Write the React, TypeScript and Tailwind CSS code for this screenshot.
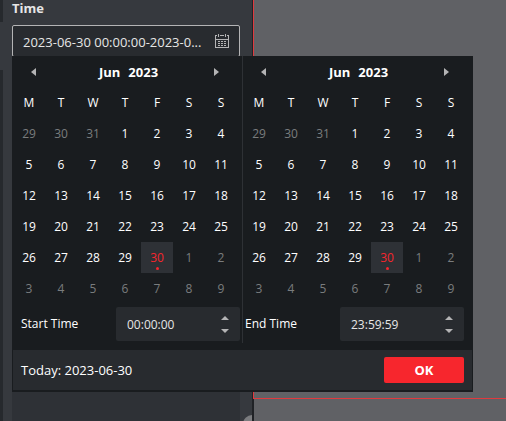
import { useState } from "react";

const weekdays = ["M", "T", "W", "T", "F", "S", "S"];

// six weeks, starting on Monday 29 May 2023
const weeks = Array.from({ length: 6 }, (_, week) =>
  Array.from({ length: 7 }, (_, day) => new Date(2023, 4, 29 + week * 7 + day))
);

function CalendarIcon() {
  return (
    <svg className="block" width="14" height="14" viewBox="0 0 14 14" shapeRendering="crispEdges" aria-hidden="true">
      <path
        d="M2 1.5H.5V13.5H13.5V1.5H12M5 1.5H9M0 5.5H14M3.5 0V3M10.5 0V3"
        fill="none"
        stroke="#b4b4b5"
      />
      <path
        d="M3 7.5H5M6 7.5H8M9 7.5H11M3 9.5H5M6 9.5H8M9 9.5H11M3 11.5H5M6 11.5H8M9 11.5H11"
        fill="none"
        stroke="#b4b4b5"
      />
    </svg>
  );
}

function Month({ label }: { label: string }) {
  const [selected, setSelected] = useState(new Date(2023, 5, 30).getTime());

  return (
    <section aria-label={label} className="pr-[5px]">
      <header className="flex h-[30px] items-center justify-between px-[18px]">
        <button type="button" aria-label="Previous month">
          <svg className="block" width="5" height="8" viewBox="0 0 5 8" fill="#b4b4b5">
            <path d="M5 0V8L0 4Z" />
          </svg>
        </button>
        <div className="flex gap-2 pb-px pl-[7px] text-[13px] font-bold">
          <span>Jun</span>
          <span>2023</span>
        </div>
        <button type="button" aria-label="Next month">
          <svg className="block" width="5" height="8" viewBox="0 0 5 8" fill="#b4b4b5">
            <path d="M0 0V8L5 4Z" />
          </svg>
        </button>
      </header>

      <table className="border-collapse">
        <thead>
          <tr>
            {weekdays.map((day, i) => (
              <th key={i} className="h-[31px] w-8 p-0 text-center font-medium">
                {day}
              </th>
            ))}
          </tr>
        </thead>
        <tbody>
          {weeks.map((week, i) => (
            <tr key={i}>
              {week.map((date) => {
                const active = date.getTime() === selected;
                const color = active
                  ? "bg-[#2e3136] text-[#f5262d]"
                  : date.getMonth() === 5
                    ? "text-white"
                    : "text-[#7a7c7e]";

                return (
                  <td key={date.getTime()} className="p-0">
                    <button
                      type="button"
                      onClick={() => setSelected(date.getTime())}
                      className={`relative block h-[31px] w-8 text-center ${color}`}
                    >
                      {date.getDate()}
                      {active && (
                        <span className="absolute bottom-[3px] left-[15px] size-[3px] rounded-full bg-[#f5262d]" />
                      )}
                    </button>
                  </td>
                );
              })}
            </tr>
          ))}
        </tbody>
      </table>
    </section>
  );
}

function TimeField({ id, label, value }: { id: string; label: string; value: string }) {
  return (
    <div className="flex items-center justify-between">
      <label htmlFor={id}>{label}</label>
      <div className="flex h-[34px] w-[124px] items-center rounded-xs bg-[#282b2f] px-[11px]">
        <input
          id={id}
          type="text"
          defaultValue={value}
          className="min-w-0 flex-1 bg-transparent pt-px text-[#e6e6e6] outline-none"
        />
        <div className="flex flex-col gap-[9px]">
          <button type="button" aria-label={`Increase ${label}`}>
            <svg className="block" width="8" height="4" viewBox="0 0 8 4" fill="#b4b4b5">
              <path d="M0 4H8L4 0Z" />
            </svg>
          </button>
          <button type="button" aria-label={`Decrease ${label}`}>
            <svg className="block" width="8" height="4" viewBox="0 0 8 4" fill="#b4b4b5">
              <path d="M0 0H8L4 4Z" />
            </svg>
          </button>
        </div>
      </div>
    </div>
  );
}

function RangePicker() {
  return (
    <div className="absolute left-0 top-[31px] z-10 w-max bg-[#191c1f] px-px pb-[2px] text-white">
      <div className="flex pb-[7px]">
        <div className="flex flex-col gap-[3px] border-r border-[#2e3135] pb-[2px] pt-px">
          <Month label="Start date" />
          <div className="pl-2 pr-[2px]">
            <TimeField id="start-time" label="Start Time" value="00:00:00" />
          </div>
        </div>
        <div className="flex flex-col gap-[3px] pb-[2px] pt-px">
          <Month label="End date" />
          <div className="pl-[2px] pr-2">
            <TimeField id="end-time" label="End Time" value="23:59:59" />
          </div>
        </div>
      </div>
      <footer className="flex h-10 items-center justify-between bg-[#282b2f] px-2 text-[13px]">
        <span>Today: 2023-06-30</span>
        <button
          type="button"
          className="h-[26px] w-20 rounded-xs bg-[#f7262d] text-center font-bold"
        >
          OK
        </button>
      </footer>
    </div>
  );
}

export default function App() {
  return (
    <div className="relative flex h-screen overflow-hidden bg-[#606165] font-['Open_Sans','Noto_Sans',sans-serif] text-[12px] leading-4 text-white">
      <aside className="relative flex w-1/2 border-r border-[#202226] bg-[#36393e]">
        <div className="flex w-[3px] flex-col">
          <div className="h-[22px] bg-[#26292d]" />
          <div className="h-12" />
          <div className="flex-1 bg-[#26292d]" />
        </div>

        <div className="flex min-w-0 flex-1 flex-col pl-[9px] pr-3">
          <label htmlFor="range" className="pb-[9px] text-[13px] font-bold text-[#e6e6e6]">
            Time
          </label>
          <div className="relative">
            <div className="flex h-8 items-center rounded-xs border border-[#b4b4b5] bg-[#282b2f] px-[10px]">
              <input
                id="range"
                type="text"
                defaultValue="2023-06-30 00:00:00-2023-0..."
                className="min-w-0 flex-1 bg-transparent pt-px text-[13px] text-[#e6e6e6] outline-none"
              />
              <button type="button" aria-label="Open calendar">
                <CalendarIcon />
              </button>
            </div>
            <RangePicker />
          </div>
          <div className="flex-1 bg-[#2e3136]" />
        </div>

        <button
          type="button"
          aria-label="Collapse panel"
          className="absolute -bottom-3 right-0 h-[18px] w-[9px] rounded-l-full bg-[#7b7c7f]"
        />
      </aside>

      <main className="flex min-w-0 flex-1 flex-col">
        <div className="h-[399px] border-b border-l border-[#e03a3e]" />
        <div className="flex-1 border-l border-[#202226]" />
      </main>
    </div>
  );
}
